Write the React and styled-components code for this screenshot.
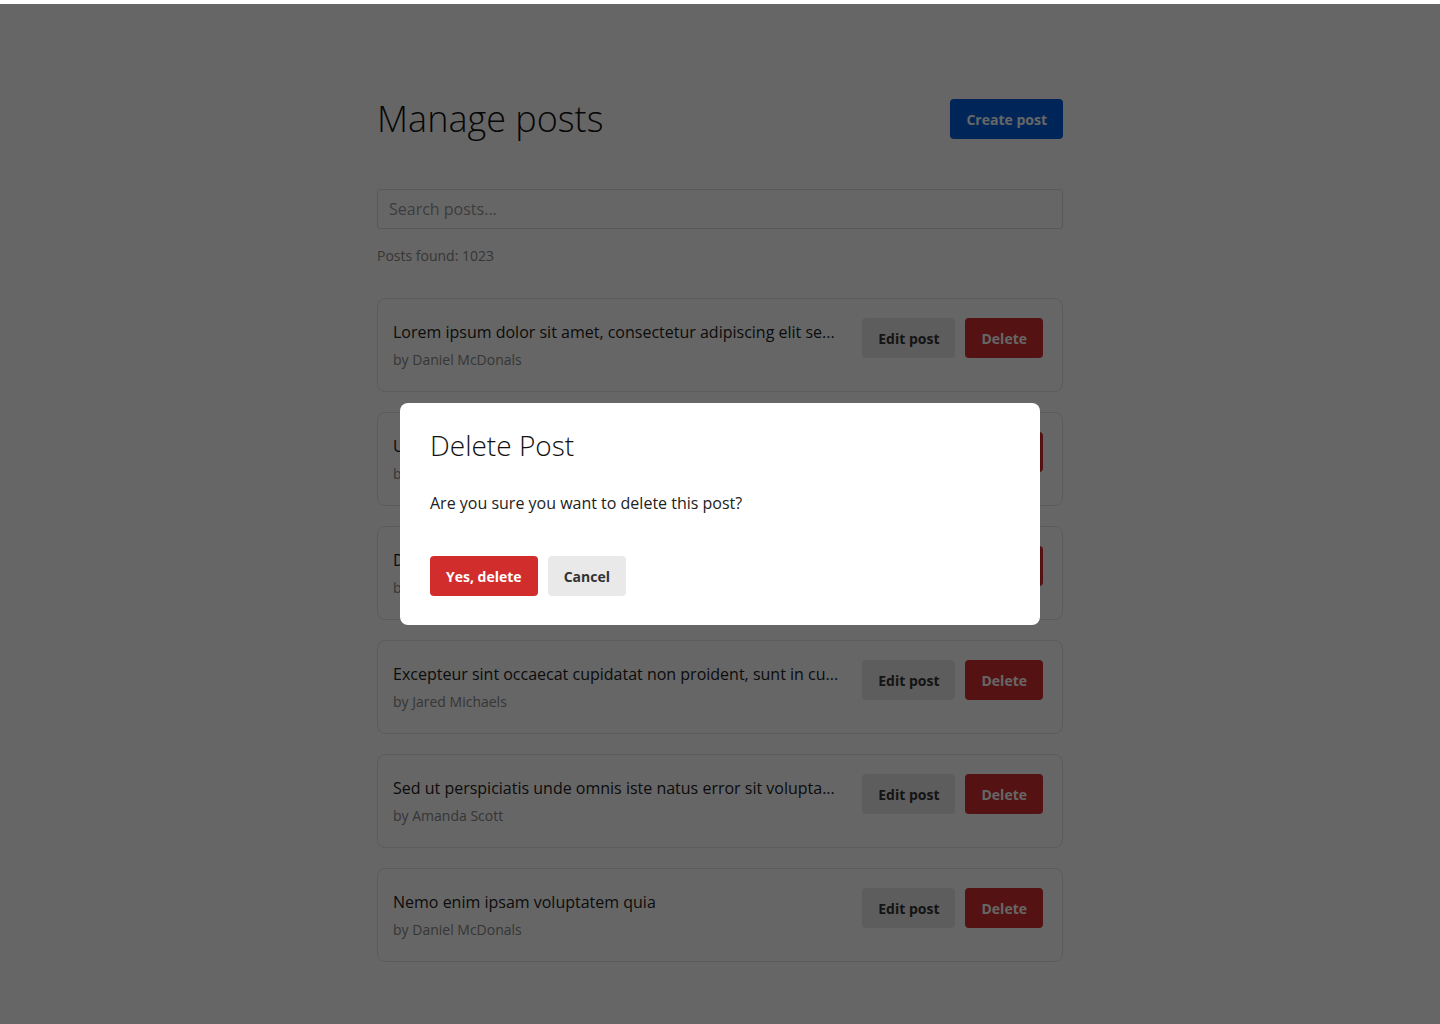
import styled, { createGlobalStyle } from "styled-components";

const GlobalStyle = createGlobalStyle`
  * { box-sizing: border-box; }
  body {
    margin: 0;
    background: #fff;
    font-family: "Open Sans", "Noto Sans", sans-serif;
    color: #222;
  }
`;

const Main = styled.main`
  width: 686px;
  margin: 0 auto;
  padding: 95px 0 60px;
`;

const Header = styled.header`
  display: flex;
  align-items: center;
  justify-content: space-between;
`;

const Title = styled.h1`
  margin: 0;
  font-size: 36px;
  line-height: 48px;
  font-weight: 300;
  color: #111;
`;

const Button = styled.button`
  height: 40px;
  padding: 0 16px;
  border: none;
  border-radius: 4px;
  font-family: inherit;
  font-size: 14px;
  font-weight: 700;
  cursor: pointer;
  background: ${(p) =>
    p.$variant === "primary" ? "#0060df" : p.$variant === "danger" ? "#d22d2d" : "#e9e9e9"};
  color: ${(p) => (p.$variant === "primary" || p.$variant === "danger" ? "#fff" : "#333")};
`;

const Search = styled.input.attrs({ type: "text", placeholder: "Search posts..." })`
  display: block;
  width: 100%;
  height: 40px;
  margin-top: 46px;
  padding: 0 11px;
  border: 1px solid #ddd;
  border-radius: 3px;
  font-family: inherit;
  font-size: 16px;
  &::placeholder {
    color: #999;
  }
`;

const Found = styled.p`
  margin: 17px 0 32px;
  font-size: 14px;
  line-height: 20px;
  color: #888;
`;

const List = styled.ul`
  list-style: none;
  margin: 0;
  padding: 0;
  display: flex;
  flex-direction: column;
  gap: 20px;
`;

const Card = styled.li`
  display: flex;
  align-items: flex-start;
  padding: 19px 19px 21px 15px;
  border: 1px solid #e3e3e3;
  border-radius: 8px;
`;

const CardText = styled.div`
  flex: 1;
  min-width: 0;
  padding-top: 2px;
`;

const PostTitle = styled.div`
  font-size: 16px;
  line-height: 24px;
  color: #222;
  white-space: nowrap;
  overflow: hidden;
`;

const Author = styled.div`
  margin-top: 6px;
  font-size: 14px;
  line-height: 20px;
  color: #888;
`;

const Actions = styled.div`
  display: flex;
  gap: 10px;
  margin-left: 20px;
`;

const Overlay = styled.div`
  position: fixed;
  top: 4px;
  left: 0;
  right: 0;
  bottom: 0;
  background: rgba(0, 0, 0, 0.6);
  display: flex;
  align-items: center;
  justify-content: center;
`;

const Modal = styled.div`
  width: 640px;
  padding: 25px 30px 29px;
  background: #fff;
  border-radius: 8px;
`;

const ModalTitle = styled.h2`
  margin: 0;
  font-size: 28px;
  line-height: 34px;
  font-weight: 300;
  color: #111;
`;

const ModalText = styled.p`
  margin: 29px 0 41px;
  font-size: 16px;
  line-height: 24px;
  color: #222;
`;

const ModalActions = styled.div`
  display: flex;
  gap: 10px;
`;

const posts = [
  { title: "Lorem ipsum dolor sit amet, consectetur adipiscing elit se...", author: "Daniel McDonals" },
  { title: "Ut enim ad minim veniam, quis nostrud exercitation ullamc...", author: "Amanda Scott" },
  { title: "Duis aute irure dolor in reprehenderit in voluptate velit ...", author: "Jared Michaels" },
  { title: "Excepteur sint occaecat cupidatat non proident, sunt in cu...", author: "Jared Michaels" },
  { title: "Sed ut perspiciatis unde omnis iste natus error sit volupta...", author: "Amanda Scott" },
  { title: "Nemo enim ipsam voluptatem quia", author: "Daniel McDonals" },
];

export default function App() {
  return (
    <>
      <GlobalStyle />
      <Main>
        <Header>
          <Title>Manage posts</Title>
          <Button $variant="primary">Create post</Button>
        </Header>
        <Search />
        <Found>Posts found: 1023</Found>
        <List>
          {posts.map((post, i) => (
            <Card key={i}>
              <CardText>
                <PostTitle>{post.title}</PostTitle>
                <Author>by {post.author}</Author>
              </CardText>
              <Actions>
                <Button>Edit post</Button>
                <Button $variant="danger">Delete</Button>
              </Actions>
            </Card>
          ))}
        </List>
      </Main>
      <Overlay>
        <Modal>
          <ModalTitle>Delete Post</ModalTitle>
          <ModalText>Are you sure you want to delete this post?</ModalText>
          <ModalActions>
            <Button $variant="danger">Yes, delete</Button>
            <Button>Cancel</Button>
          </ModalActions>
        </Modal>
      </Overlay>
    </>
  );
}
